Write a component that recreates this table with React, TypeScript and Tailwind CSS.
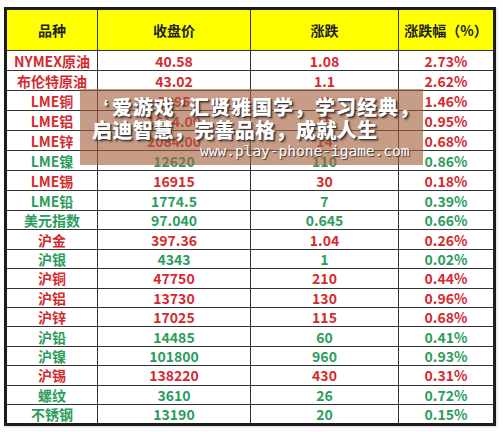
const RED = 'text-[#d42a2e]';
const GREEN = 'text-[#2a9d5c]';

interface Row {
  name: string;
  price: string;
  change: string;
  pct: string;
  up: boolean;
}

const ROWS: Row[] = [
  { name: 'NYMEX原油', price: '40.58', change: '1.08', pct: '2.73%', up: true },
  { name: '布伦特原油', price: '43.02', change: '1.1', pct: '2.62%', up: true },
  { name: 'LME铜', price: '5895', change: '85', pct: '1.46%', up: true },
  { name: 'LME铝', price: '1614.00', change: '15', pct: '0.95%', up: true },
  { name: 'LME锌', price: '2084.00', change: '14', pct: '0.68%', up: true },
  { name: 'LME镍', price: '12620', change: '110', pct: '0.86%', up: false },
  { name: 'LME锡', price: '16915', change: '30', pct: '0.18%', up: true },
  { name: 'LME铅', price: '1774.5', change: '7', pct: '0.39%', up: false },
  { name: '美元指数', price: '97.040', change: '0.645', pct: '0.66%', up: false },
  { name: '沪金', price: '397.36', change: '1.04', pct: '0.26%', up: true },
  { name: '沪银', price: '4343', change: '1', pct: '0.02%', up: false },
  { name: '沪铜', price: '47750', change: '210', pct: '0.44%', up: true },
  { name: '沪铝', price: '13730', change: '130', pct: '0.96%', up: true },
  { name: '沪锌', price: '17025', change: '115', pct: '0.68%', up: true },
  { name: '沪铅', price: '14485', change: '60', pct: '0.41%', up: false },
  { name: '沪镍', price: '101800', change: '960', pct: '0.93%', up: false },
  { name: '沪锡', price: '138220', change: '430', pct: '0.31%', up: true },
  { name: '螺纹', price: '3610', change: '26', pct: '0.72%', up: false },
  { name: '不锈钢', price: '13190', change: '20', pct: '0.15%', up: false },
];

const COLS = 'grid grid-cols-[90px_153px_148px_95px]';
const SHADOW = '[text-shadow:1px_1px_0_#3a3a3a,2px_2px_2px_rgba(0,0,0,0.45)]';

export default function App() {
  return (
    <div className="relative w-[503px] h-[432px] bg-white pl-[4px] pt-[7px] font-['Noto_Sans_CJK_SC','Noto_Sans',sans-serif]">
      <div className="w-[492px] border-[3px] border-[#1c1c1c] shadow-[1px_1px_2px_rgba(0,0,0,0.15)]">
        <div className={`${COLS} h-[40px] bg-[#ffff00] text-[14px] font-bold text-[#222]`}>
          <div className="flex items-center justify-center">品种</div>
          <div className="flex items-center justify-center border-l border-[#333]">收盘价</div>
          <div className="flex items-center justify-center border-l border-[#333]">涨跌</div>
          <div className="flex items-center justify-center border-l border-[#333]">涨跌幅（%）</div>
        </div>
        {ROWS.map((r, i) => {
          const color = r.up ? RED : GREEN;
          return (
            <div
              key={r.name}
              className={`${COLS} ${i < 8 ? 'h-[20px]' : 'h-[19.4px]'} border-t border-[#333] text-[14px] font-bold leading-none ${color}`}
            >
              <div className="flex items-center justify-center">{r.name}</div>
              <div className="flex items-center justify-center border-l border-[#333]">{r.price}</div>
              <div className="flex items-center justify-center border-l border-[#333]">{r.change}</div>
              <div className="flex items-center justify-center border-l border-[#333]">{r.pct}</div>
            </div>
          );
        })}
      </div>

      {/* watermark banner over the table */}
      <div className="absolute left-[80px] top-[89px] w-[343px] h-[76px] bg-[rgba(165,95,62,0.62)] text-white whitespace-nowrap">
        <div className={`flex pl-[20px] pt-[7px] text-[20px] leading-[22px] font-black ${SHADOW}`}>
          <span className="font-['Liberation_Sans',sans-serif] w-[12px] text-center">‘</span>
          <span className="tracking-[1px]">爱游戏</span>
          <span className="font-['Liberation_Sans',sans-serif] w-[14px] text-center">’</span>
          <span className="tracking-[1px]">汇贤雅国学，学习经典，</span>
        </div>
        <div className={`pl-[12px] pt-[1px] text-[20px] leading-[22px] font-black tracking-[0.4px] ${SHADOW}`}>
          启迪智慧，完善品格，成就人生
        </div>
        <div className="pl-[120px] pt-[1px] text-[14.5px] leading-[18px] font-['DejaVu_Sans_Mono',monospace] [text-shadow:1px_1px_1px_#333]">
          www.play-phone-igame.com
        </div>
      </div>
    </div>
  );
}
